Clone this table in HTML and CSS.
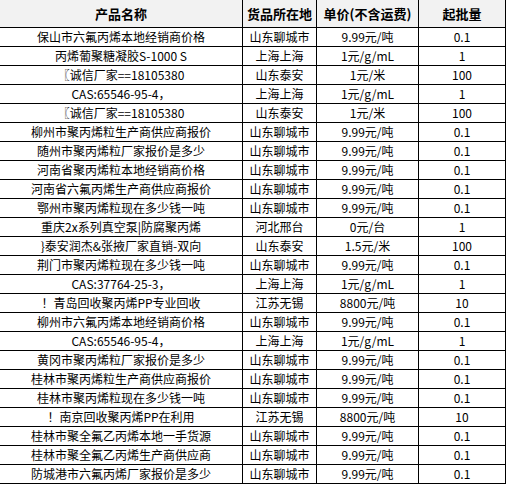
FILE: index.html
```html
<!DOCTYPE html>
<html lang="zh">
<head>
<meta charset="utf-8">
<title>产品列表</title>
<link rel="stylesheet" href="styles.css">
</head>
<body>
<div class="table">
  <div class="cell head">产品名称</div>
  <div class="cell head">货品所在地</div>
  <div class="cell head">单价(不含运费)</div>
  <div class="cell head">起批量</div>

  <div class="cell">保山市六氟丙烯本地经销商价格</div><div class="cell">山东聊城市</div><div class="cell">9.99元/吨</div><div class="cell">0.1</div>
  <div class="cell">丙烯葡聚糖凝胶S-1000 S</div><div class="cell">上海上海</div><div class="cell">1元/g/mL</div><div class="cell">1</div>
  <div class="cell">〖诚信厂家==18105380</div><div class="cell">山东泰安</div><div class="cell">1元/米</div><div class="cell">100</div>
  <div class="cell">CAS:65546-95-4，</div><div class="cell">上海上海</div><div class="cell">1元/g/mL</div><div class="cell">1</div>
  <div class="cell">〖诚信厂家==18105380</div><div class="cell">山东泰安</div><div class="cell">1元/米</div><div class="cell">100</div>
  <div class="cell">柳州市聚丙烯粒生产商供应商报价</div><div class="cell">山东聊城市</div><div class="cell">9.99元/吨</div><div class="cell">0.1</div>
  <div class="cell">随州市聚丙烯粒厂家报价是多少</div><div class="cell">山东聊城市</div><div class="cell">9.99元/吨</div><div class="cell">0.1</div>
  <div class="cell">河南省聚丙烯粒本地经销商价格</div><div class="cell">山东聊城市</div><div class="cell">9.99元/吨</div><div class="cell">0.1</div>
  <div class="cell">河南省六氟丙烯生产商供应商报价</div><div class="cell">山东聊城市</div><div class="cell">9.99元/吨</div><div class="cell">0.1</div>
  <div class="cell">鄂州市聚丙烯粒现在多少钱一吨</div><div class="cell">山东聊城市</div><div class="cell">9.99元/吨</div><div class="cell">0.1</div>
  <div class="cell">重庆2x系列真空泵|防腐聚丙烯</div><div class="cell">河北邢台</div><div class="cell">0元/台</div><div class="cell">1</div>
  <div class="cell">}泰安润杰&amp;张掖厂家直销-双向</div><div class="cell">山东泰安</div><div class="cell">1.5元/米</div><div class="cell">100</div>
  <div class="cell">荆门市聚丙烯粒现在多少钱一吨</div><div class="cell">山东聊城市</div><div class="cell">9.99元/吨</div><div class="cell">0.1</div>
  <div class="cell">CAS:37764-25-3，</div><div class="cell">上海上海</div><div class="cell">1元/g/mL</div><div class="cell">1</div>
  <div class="cell">！青岛回收聚丙烯PP专业回收</div><div class="cell">江苏无锡</div><div class="cell">8800元/吨</div><div class="cell">10</div>
  <div class="cell">柳州市六氟丙烯本地经销商价格</div><div class="cell">山东聊城市</div><div class="cell">9.99元/吨</div><div class="cell">0.1</div>
  <div class="cell">CAS:65546-95-4，</div><div class="cell">上海上海</div><div class="cell">1元/g/mL</div><div class="cell">1</div>
  <div class="cell">黄冈市聚丙烯粒厂家报价是多少</div><div class="cell">山东聊城市</div><div class="cell">9.99元/吨</div><div class="cell">0.1</div>
  <div class="cell">桂林市聚丙烯粒生产商供应商报价</div><div class="cell">山东聊城市</div><div class="cell">9.99元/吨</div><div class="cell">0.1</div>
  <div class="cell">桂林市聚丙烯粒现在多少钱一吨</div><div class="cell">山东聊城市</div><div class="cell">9.99元/吨</div><div class="cell">0.1</div>
  <div class="cell">！南京回收聚丙烯PP在利用</div><div class="cell">江苏无锡</div><div class="cell">8800元/吨</div><div class="cell">10</div>
  <div class="cell">桂林市聚全氟乙丙烯本地一手货源</div><div class="cell">山东聊城市</div><div class="cell">9.99元/吨</div><div class="cell">0.1</div>
  <div class="cell">桂林市聚全氟乙丙烯生产商供应商</div><div class="cell">山东聊城市</div><div class="cell">9.99元/吨</div><div class="cell">0.1</div>
  <div class="cell">防城港市六氟丙烯厂家报价是多少</div><div class="cell">山东聊城市</div><div class="cell">9.99元/吨</div><div class="cell">0.1</div>
</div>
</body>
</html>
```

FILE: styles.css
```css
html, body {
  margin: 0;
  padding: 0;
  background: #ffffff;
}

body {
  font-family: "Noto Sans CJK SC", "Liberation Sans", sans-serif;
  font-size: 12px;
  color: #000000;
}

.table {
  display: grid;
  grid-template-columns: 243px 74px 102px 87px;
  grid-template-rows: 28px;
  grid-auto-rows: 19px;
  width: 506px;
}

.cell {
  box-sizing: border-box;
  border-right: 1px solid #000000;
  border-bottom: 1px solid #000000;
  display: flex;
  align-items: center;
  justify-content: center;
  white-space: nowrap;
  overflow: hidden;
  line-height: 1;
}

.head {
  background: #f2f2f2;
  font-size: 13px;
  font-weight: bold;
}
```
